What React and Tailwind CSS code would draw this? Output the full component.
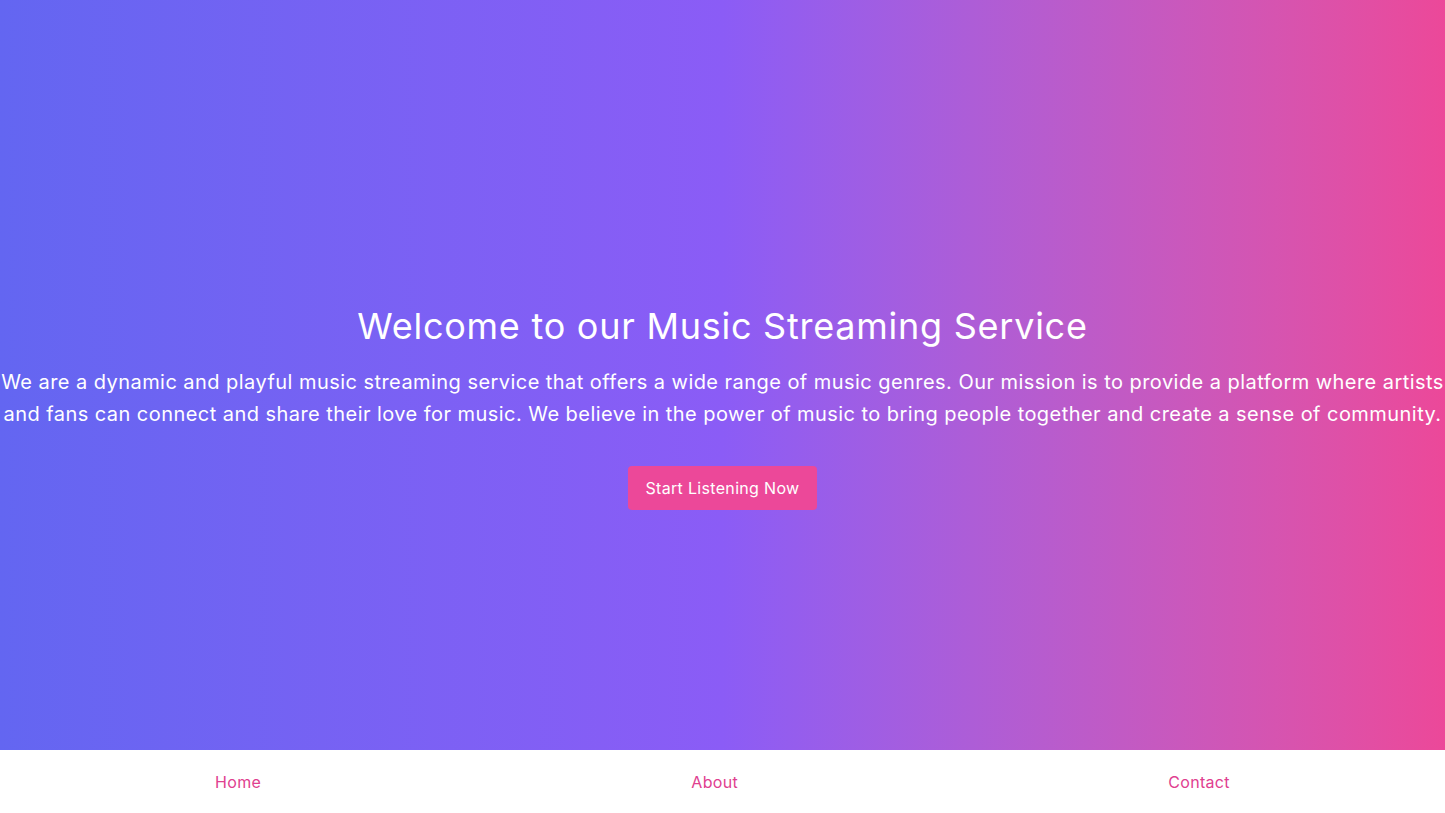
export default function App() {
  return (
    <div className="min-h-screen bg-white font-['Inter',sans-serif] tracking-[0.32px]">
      <section className="h-[750px] flex flex-col items-center justify-center pt-[65px] text-white text-center bg-gradient-to-r from-[#6366f1] via-[#8b5cf6] to-[#ec4899]">
        <h1 className="text-4xl mb-5 tracking-[0.75px]">Welcome to our Music Streaming Service</h1>
        <p className="text-xl leading-8 mb-9 tracking-[0.45px]">
          We are a dynamic and playful music streaming service that offers a wide range of music genres. Our mission is to provide a platform where artists and fans can connect and share their love for music. We believe in the power of music to bring people together and create a sense of community.
        </p>
        <button className="bg-[#ec4899] text-white px-[18px] py-2.5 rounded">Start Listening Now</button>
      </section>
      <nav className="flex justify-around py-5 bg-white">
        <a href="#" className="text-[#e0408f]">Home</a>
        <a href="#" className="text-[#e0408f]">About</a>
        <a href="#" className="text-[#e0408f]">Contact</a>
      </nav>
    </div>
  );
}
